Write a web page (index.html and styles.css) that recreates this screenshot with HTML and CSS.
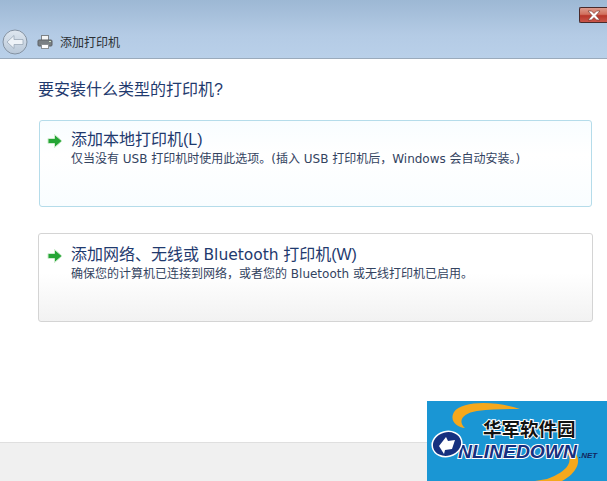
FILE: index.html
```html
<!DOCTYPE html>
<html lang="zh-CN">
<head>
  <meta charset="UTF-8" />
  <meta name="viewport" content="width=device-width, initial-scale=1.0" />
  <title>添加打印机</title>
  <link rel="stylesheet" href="styles.css">
</head>
<body>
  <div class="window">
    <div class="titlebar">
      <div class="close-row">
        <div class="close-btn">
          <svg width="14" height="11" viewBox="0 0 14 11"><path d="M1 1h3.500L7 3.500 9.500 1H13L9 5.500l4 4.500H9.500L7 7.500 4.500 10H1l4-4.500z" fill="#fff" stroke="#7a3a30" stroke-width=".7"/></svg>
        </div>
      </div>
      <div class="nav-row">
        <div class="back-btn">
          <svg width="26" height="26" viewBox="0 0 26 26">
            <defs>
              <linearGradient id="backFill" x1="0" y1="0" x2="0" y2="1">
                <stop offset="0" stop-color="#dfe7f0"/>
                <stop offset="1" stop-color="#b9c8d8"/>
              </linearGradient>
            </defs>
            <circle cx="13" cy="13" r="12" fill="url(#backFill)" stroke="#8492a2"/>
            <path d="M5 13l7-6.500V10.500h9v5h-9v4z" fill="#eef3f8" stroke="#9aa8b8" stroke-width=".8"/>
          </svg>
        </div>
        <svg class="printer-icon" width="16" height="16" viewBox="0 0 16 16">
          <rect x="4.500" y="1.500" width="7" height="5" fill="#f5f5f5" stroke="#7d8286"/>
          <rect x="1" y="6" width="14" height="6" rx="1" fill="#7a8084" stroke="#5c6165"/>
          <rect x="4.500" y="10.500" width="7" height="4" fill="#fff" stroke="#8b9094"/>
          <rect x="12" y="7" width="2" height="1" fill="#cfe6c8"/>
        </svg>
        <span class="nav-title">添加打印机</span>
      </div>
    </div>

    <div class="content">
      <h1 class="heading">要安装什么类型的打印机?</h1>

      <div class="option option-active">
        <svg class="arrow" width="16" height="16" viewBox="0 0 16 16"><path d="M1 5.500h6.500V1.500L15 8l-7.500 6.500v-4H1z" fill="#25a535" stroke="#cfeccf" stroke-width="1"/></svg>
        <div class="option-text">
          <div class="option-title">添加本地打印机(L)</div>
          <div class="option-desc">仅当没有 USB 打印机时使用此选项。(插入 USB 打印机后，Windows 会自动安装。)</div>
        </div>
      </div>

      <div class="option option-plain">
        <svg class="arrow" width="16" height="16" viewBox="0 0 16 16"><path d="M1 5.500h6.500V1.500L15 8l-7.500 6.500v-4H1z" fill="#25a535" stroke="#cfeccf" stroke-width="1"/></svg>
        <div class="option-text">
          <div class="option-title">添加网络、无线或 <span class="latin">Bluetooth</span> 打印机(W)</div>
          <div class="option-desc">确保您的计算机已连接到网络，或者您的 Bluetooth 或无线打印机已启用。</div>
        </div>
      </div>
    </div>

    <div class="footer"></div>
  </div>

  <svg class="logo" width="180" height="80" viewBox="0 0 180 80">
    <rect width="180" height="80" fill="#1a96d4"/>
    <path d="M93 8C70 0 35-1 27 11c-5 9 3 15 11 16-8-7-2-15 12-17 15-2 30-2 43-2z" fill="#f5a81c"/>
    <path d="M140 52c6 8 2 18-20 26l-12 2h27c15-8 20-20 13-28z" fill="#f5a81c"/>
    <text class="logo-cn" x="56" y="35">华军软件园</text>
    <text class="logo-en" x="31" y="57" textLength="119" lengthAdjust="spacingAndGlyphs">NLINEDOWN</text>
    <ellipse cx="20" cy="43" rx="15" ry="12.500" transform="rotate(-15 20 43)" fill="#16307f" stroke="#fff" stroke-width="1.500"/>
    <path d="M12 45l7-9 2 4 7-1-3 9-7 1-1 4z" fill="#fff"/>
    <text class="logo-net" x="152" y="57">.NET</text>
  </svg>
</body>
</html>
```

FILE: styles.css
```css
body {
  margin: 0;
  font-family: "Liberation Sans", "Noto Sans CJK SC", sans-serif;
  background-color: #fff;
  overflow: hidden;
}

.window {
  height: 481px;
  display: flex;
  flex-direction: column;
}

.titlebar {
  height: 58px;
  background: linear-gradient(to bottom, #9db8d4 0%, #b4cbe5 60%, #b9d0e9 100%);
  border-bottom: 1px solid #9aaabb;
  display: flex;
  flex-direction: column;
}

.close-row {
  display: flex;
  justify-content: flex-end;
  padding-top: 7px;
}

.close-btn {
  width: 28px;
  height: 16px;
  box-sizing: border-box;
  border: 1px solid #4a2a2a;
  border-right: none;
  border-radius: 2px 0 0 2px;
  background: linear-gradient(to bottom, #dc9a8c 0%, #d2705e 45%, #b8362a 55%, #c9564a 100%);
  display: flex;
  align-items: center;
  justify-content: center;
}

.nav-row {
  display: flex;
  align-items: center;
  padding-left: 2px;
  margin-top: 6px;
}

.back-btn {
  width: 26px;
  height: 26px;
}

.printer-icon {
  margin-left: 9px;
}

.nav-title {
  margin-left: 7px;
  margin-bottom: 2px;
  font-size: 12px;
  color: #2b2f33;
}

.content {
  flex: 1;
  padding: 0 14px 0 38px;
}

.heading {
  margin: 21px 0 0;
  font-size: 16px;
  line-height: 20px;
  font-weight: normal;
  color: #1f3a6e;
}

.option {
  display: flex;
  box-sizing: border-box;
  border-radius: 3px;
  padding: 10px 7px;
}

.option-active {
  margin: 20px 1px 0;
  height: 87px;
  border: 1px solid #b5dcea;
  background: linear-gradient(to bottom, #f8fdff, #fff 40%, #f9fdff);
}

.option-plain {
  margin-top: 26px;
  height: 89px;
  border: 1px solid #d4d4d4;
  background: linear-gradient(to bottom, #fff 45%, #f2f2f2);
  padding: 12px 8px;
}

.arrow {
  margin-top: 2px;
  flex-shrink: 0;
}

.option-text {
  margin-left: 8px;
}

.option-title {
  font-size: 16px;
  line-height: 18px;
  color: #1f3a6e;
}

.latin {
  font-family: "DejaVu Sans", sans-serif;
  font-size: 15.500px;
}

.option-desc {
  margin-top: 1px;
  font-family: "DejaVu Sans", "Noto Sans CJK SC", sans-serif;
  font-size: 12px;
  line-height: 18px;
  color: #33435f;
  white-space: nowrap;
}

.footer {
  height: 38px;
  background-color: #f0f0f0;
  border-top: 1px solid #dfdfdf;
}

.logo {
  position: absolute;
  left: 427px;
  top: 401px;
}

.logo-cn {
  font-size: 18.500px;
  font-weight: bold;
  fill: #111;
  stroke: #fff;
  stroke-width: 2px;
  paint-order: stroke;
}

.logo-en {
  font-size: 19px;
  font-weight: bold;
  font-style: italic;
  fill: #16307f;
  stroke: #fff;
  stroke-width: 2px;
  paint-order: stroke;
}

.logo-net {
  font-size: 8px;
  font-weight: bold;
  font-style: italic;
  fill: #12275f;
}
```
